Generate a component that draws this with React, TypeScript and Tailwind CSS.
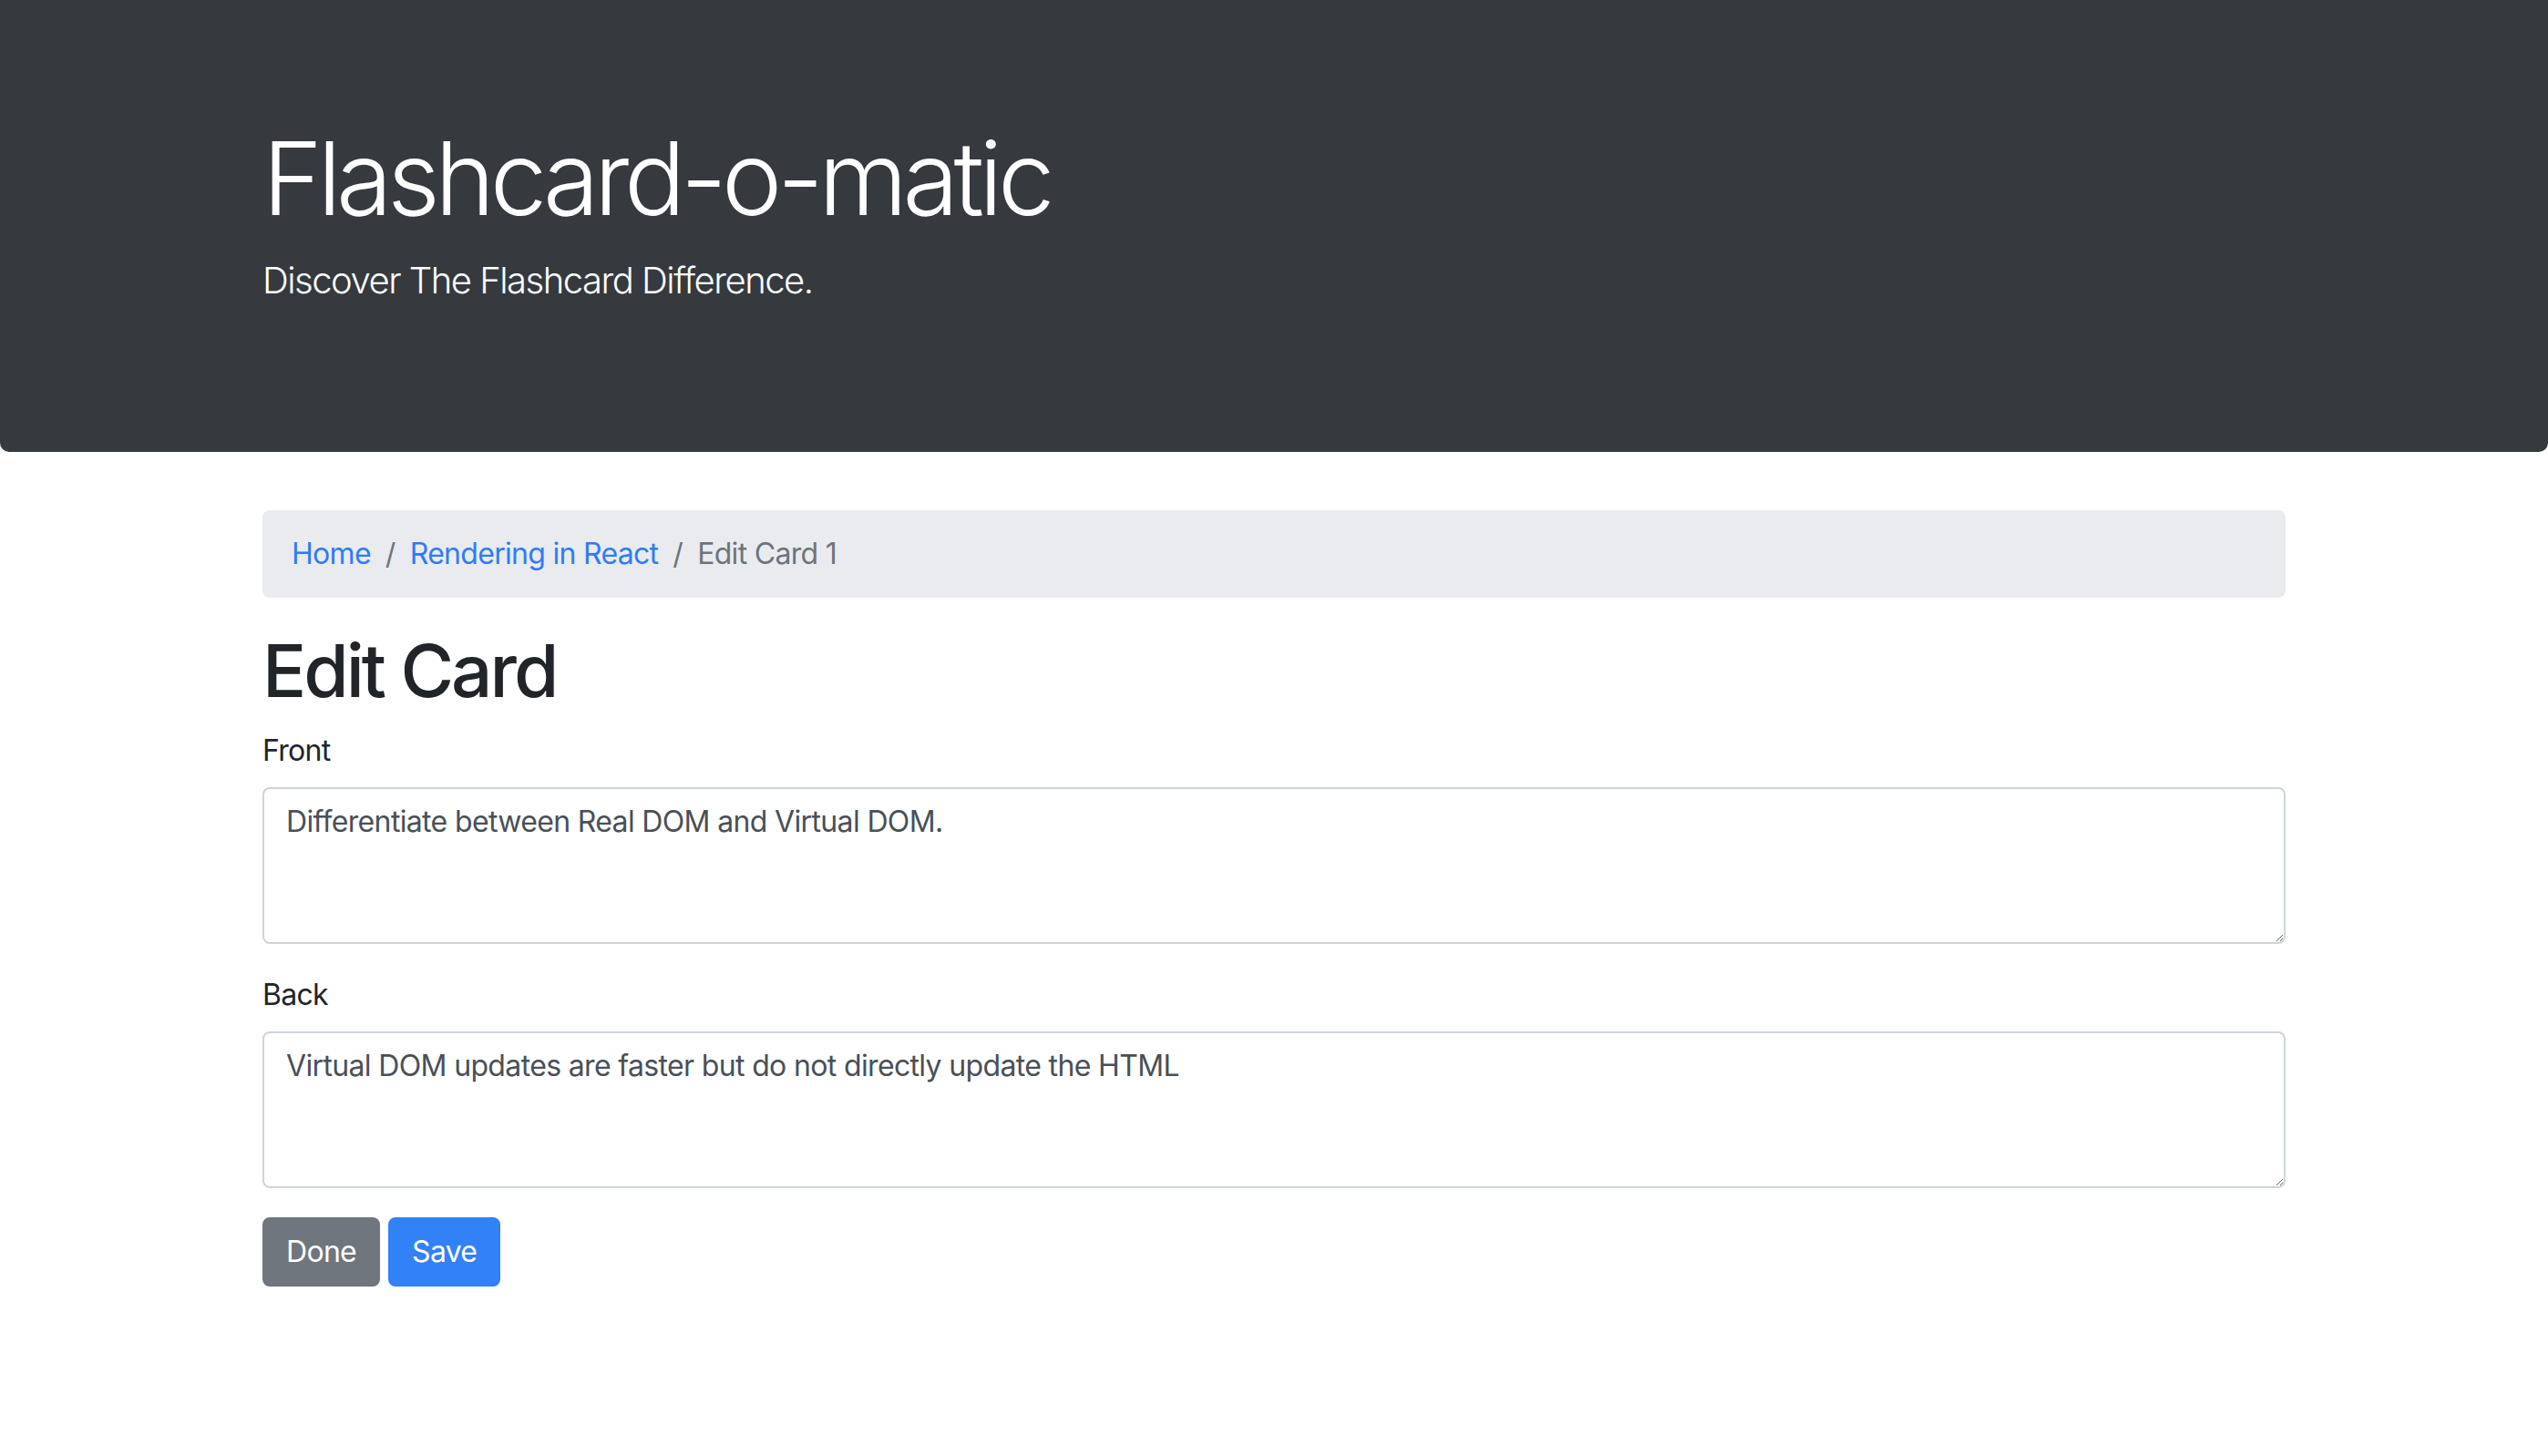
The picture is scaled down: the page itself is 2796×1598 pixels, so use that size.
const FONT = "font-['Inter','Liberation_Sans',sans-serif]";

function Breadcrumb() {
  const crumbs = [
    { label: 'Home', href: '#' },
    { label: 'Rendering in React', href: '#' },
  ];
  return (
    <nav aria-label="breadcrumb">
      <ol className="flex items-center mb-8 px-8 py-[24px] rounded-[8px] bg-[#eaebef] text-[32px] leading-[48px] tracking-[-0.7px]">
        {crumbs.map(c => (
          <li key={c.label} className="flex items-center">
            <a href={c.href} className="text-[#2f7cf6]">{c.label}</a>
            <span className="px-4 text-[#6c757d]">/</span>
          </li>
        ))}
        <li className="text-[#6c757d]">Edit Card 1</li>
      </ol>
    </nav>
  );
}

function Field({ id, label, value }: { id: string; label: string; value: string }) {
  return (
    <div className="mb-8">
      <label htmlFor={id} className="inline-block mb-4 text-[32px] leading-[48px] tracking-[-0.7px] text-[#212529]">
        {label}
      </label>
      <textarea
        id={id}
        rows={3}
        defaultValue={value}
        className="block w-full h-[172px] px-[24px] py-[12px] border-2 border-[#ced4da] rounded-[8px] bg-white text-[32px] leading-[48px] tracking-[-0.65px] text-[#495057] outline-none"
      />
    </div>
  );
}

export default function App() {
  return (
    <div className={`${FONT} min-h-[1598px] bg-white text-[#212529]`}>
      <div className="mb-16 pt-[128px] pb-[126px] bg-[#363a3f] rounded-b-[10px] text-white">
        <div className="mx-auto w-[2280px] px-[30px]">
          <h1 className="mb-4 text-[112px] leading-[1.2] font-light tracking-[-5.5px]">Flashcard-o-matic</h1>
          <p className="mb-8 text-[40px] leading-[60px] font-light tracking-[-1.5px]">Discover The Flashcard Difference.</p>
        </div>
      </div>

      <div className="mx-auto w-[2280px] px-[30px]">
        <Breadcrumb />
        <h1 className="mb-4 text-[80px] leading-[96px] font-medium tracking-[-3px]">Edit Card</h1>
        <form onSubmit={e => e.preventDefault()}>
          <Field id="front" label="Front" value="Differentiate between Real DOM and Virtual DOM." />
          <Field id="back" label="Back" value="Virtual DOM updates are faster but do not directly update the HTML" />
          <div className="flex gap-[9px]">
            <button type="button" className="px-[24px] py-[12px] border-2 border-[#6f767e] rounded-[8px] bg-[#6f767e] text-white text-[32px] leading-[48px] tracking-[-0.7px]">
              Done
            </button>
            <button type="submit" className="px-[24px] py-[12px] border-2 border-[#3381f6] rounded-[8px] bg-[#3381f6] text-white text-[32px] leading-[48px] tracking-[-0.7px]">
              Save
            </button>
          </div>
        </form>
      </div>
    </div>
  );
}
